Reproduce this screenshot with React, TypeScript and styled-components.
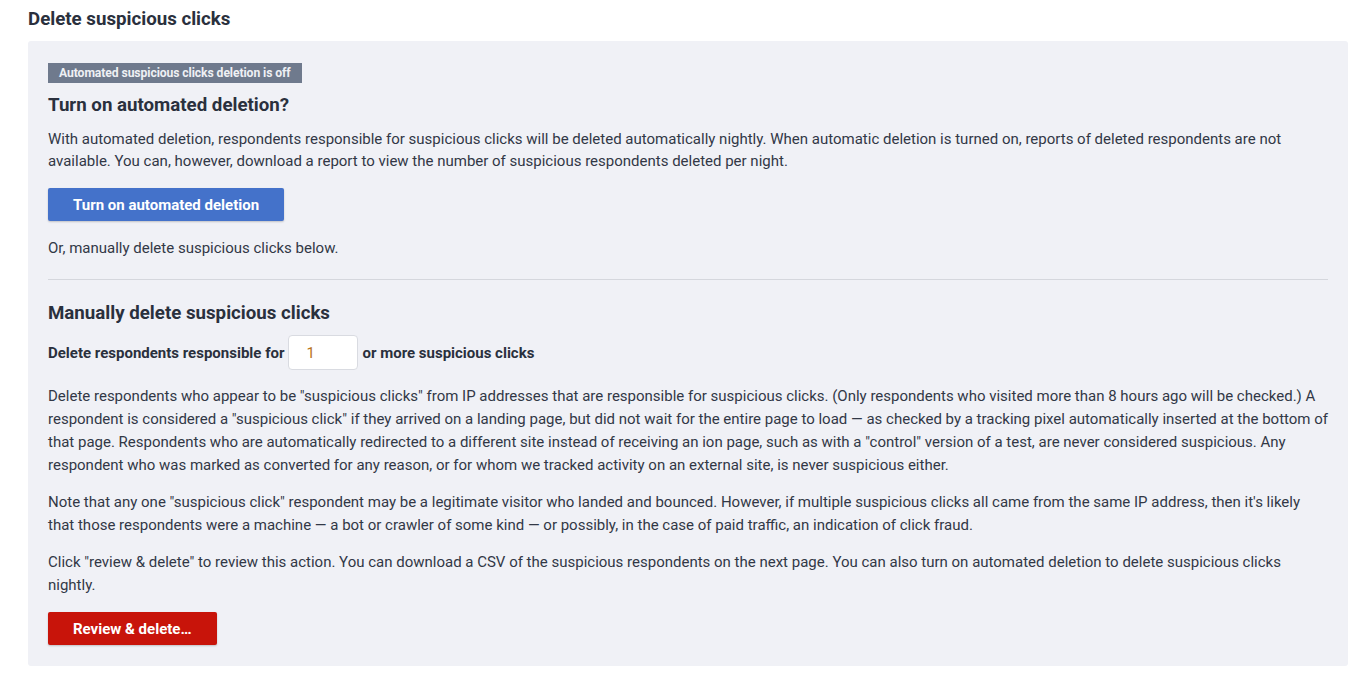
import React from "react";
import styled, { createGlobalStyle } from "styled-components";

const Global = createGlobalStyle`
  html, body { margin: 0; padding: 0; background: #fff; }
  body { font-family: Roboto, "Noto Sans", Arial, sans-serif; color: #2c3241; }
`;

const Page = styled.div`
  padding: 8px 20px 16px 28px;
`;

const Title = styled.h2`
  margin: 0 0 11px;
  font-size: 18.7px;
  line-height: 22px;
  font-weight: 700;
  color: #2a303d;
`;

const Panel = styled.section`
  background: #f0f1f6;
  border-radius: 3px;
  padding: 22px 20px 21px 20px;
`;

const Badge = styled.span`
  display: inline-block;
  background: #6f7a8d;
  color: #eef0f4;
  font-size: 12.2px;
  font-weight: 700;
  line-height: 20px;
  padding: 0 11px;
  letter-spacing: -0.1px;
  vertical-align: top;
`;

const Heading = styled.h3<{ $mt: number; $mb: number }>`
  margin: ${(p) => p.$mt}px 0 ${(p) => p.$mb}px;
  font-size: 18.7px;
  line-height: 26px;
  font-weight: 700;
  color: #2a303d;
`;

const Para = styled.p<{ $lh?: number; $mb?: number }>`
  margin: 0 0 ${(p) => p.$mb ?? 14}px;
  font-size: 15px;
  line-height: ${(p) => p.$lh ?? 22}px;
  color: #323846;
`;

const Button = styled.button<{ $variant: "primary" | "danger" }>`
  display: inline-block;
  border: none;
  border-radius: 2px;
  height: 33px;
  padding: 0 25px;
  font-family: inherit;
  font-size: 15px;
  font-weight: 700;
  color: #fff;
  background: ${(p) => (p.$variant === "primary" ? "#4472ca" : "#c8140a")};
  box-shadow: 0 1px 2px rgba(0, 0, 0, 0.2);
  cursor: pointer;
  vertical-align: top;
`;

const ButtonRow = styled.div<{ $mb: number }>`
  height: 33px;
  margin: 0 0 ${(p) => p.$mb}px;
`;

const Divider = styled.hr`
  border: none;
  border-top: 1px solid #d5d7dd;
  margin: 19px 0 20px;
`;

const Row = styled.div`
  display: flex;
  align-items: center;
  gap: 4px;
  font-size: 15px;
  font-weight: 700;
  color: #2a303d;
  margin-bottom: 15px;
`;

const NumInput = styled.input`
  width: 70px;
  height: 35px;
  box-sizing: border-box;
  border: 1px solid #d9dbe1;
  border-radius: 4px;
  background: #fff;
  padding: 0 0 0 17px;
  font-family: inherit;
  font-size: 15px;
  color: #b8741a;
  outline: none;
`;

export default function App() {
  return (
    <>
      <Global />
      <Page>
        <Title>Delete suspicious clicks</Title>
        <Panel>
          <Badge>Automated suspicious clicks deletion is off</Badge>
          <Heading $mt={9} $mb={10}>Turn on automated deletion?</Heading>
          <Para $mb={16}>
            With automated deletion, respondents responsible for suspicious clicks will be deleted automatically nightly. When automatic deletion is turned on, reports of deleted respondents are not available. You can, however, download a report to view the number of suspicious respondents deleted per night.
          </Para>
          <ButtonRow $mb={16}>
            <Button $variant="primary">Turn on automated deletion</Button>
          </ButtonRow>
          <Para $lh={23} $mb={0}>Or, manually delete suspicious clicks below.</Para>
          <Divider />
          <Heading $mt={0} $mb={9}>Manually delete suspicious clicks</Heading>
          <Row>
            <span>Delete respondents responsible for</span>
            <NumInput defaultValue="1" />
            <span>or more suspicious clicks</span>
          </Row>
          <Para $lh={23}>
            Delete respondents who appear to be "suspicious clicks" from IP addresses that are responsible for suspicious clicks. (Only respondents who visited more than 8 hours ago will be checked.) A respondent is considered a "suspicious click" if they arrived on a landing page, but did not wait for the entire page to load — as checked by a tracking pixel automatically inserted at the bottom of that page. Respondents who are automatically redirected to a different site instead of receiving an ion page, such as with a "control" version of a test, are never considered suspicious. Any respondent who was marked as converted for any reason, or for whom we tracked activity on an external site, is never suspicious either.
          </Para>
          <Para $lh={23}>
            Note that any one "suspicious click" respondent may be a legitimate visitor who landed and bounced. However, if multiple suspicious clicks all came from the same IP address, then it's likely that those respondents were a machine — a bot or crawler of some kind — or possibly, in the case of paid traffic, an indication of click fraud.
          </Para>
          <Para $lh={23} $mb={15}>
            Click "review &amp; delete" to review this action. You can download a CSV of the suspicious respondents on the next page. You can also turn on automated deletion to delete suspicious clicks nightly.
          </Para>
          <ButtonRow $mb={0}>
            <Button $variant="danger">Review &amp; delete…</Button>
          </ButtonRow>
        </Panel>
      </Page>
    </>
  );
}
